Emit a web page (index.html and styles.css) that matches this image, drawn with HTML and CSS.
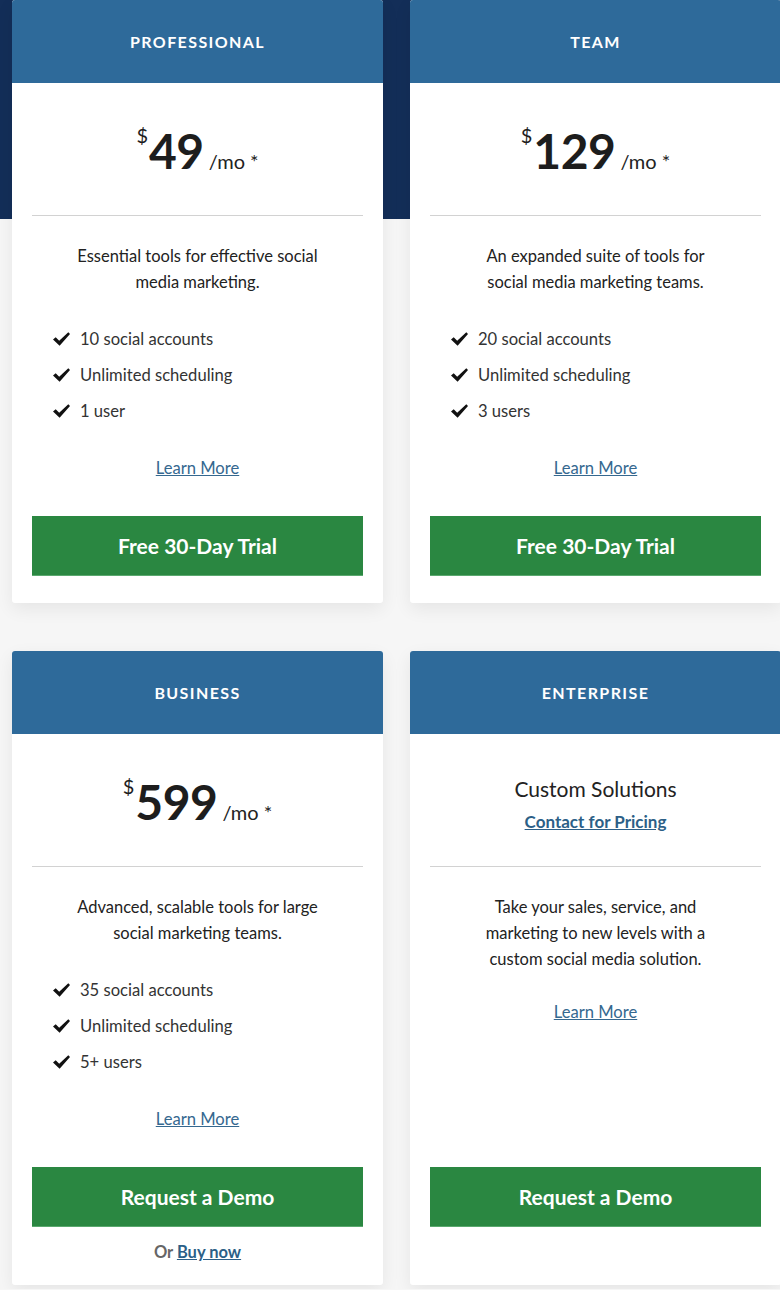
FILE: index.html
```html
<!DOCTYPE html>
<html lang="en">
<head>
<meta charset="utf-8">
<title>Pricing</title>
<link rel="stylesheet" href="styles.css">
</head>
<body>
<main class="page">
  <div class="grid">
    <section class="card">
      <header class="card-head">PROFESSIONAL</header>
      <div class="card-body">
        <div class="price-area">
          <div class="price"><span class="cur">$</span><span class="amount">49</span><span class="per">/mo *</span></div>
        </div>
        <p class="desc">Essential tools for effective social<br>media marketing.</p>
        <ul class="features">
          <li><svg class="check" viewBox="0 0 17 14"><path d="M0 7.6 L2.7 5.3 L6.2 8.7 L15.3 0.2 L17 1.9 L6.6 13.7 Z"/></svg>10 social accounts</li>
          <li><svg class="check" viewBox="0 0 17 14"><path d="M0 7.6 L2.7 5.3 L6.2 8.7 L15.3 0.2 L17 1.9 L6.6 13.7 Z"/></svg>Unlimited scheduling</li>
          <li><svg class="check" viewBox="0 0 17 14"><path d="M0 7.6 L2.7 5.3 L6.2 8.7 L15.3 0.2 L17 1.9 L6.6 13.7 Z"/></svg>1 user</li>
        </ul>
        <a class="learn" href="#">Learn More</a>
        <div class="actions">
          <a class="btn" href="#">Free 30-Day Trial</a>
        </div>
      </div>
    </section>
    <section class="card">
      <header class="card-head">TEAM</header>
      <div class="card-body">
        <div class="price-area">
          <div class="price"><span class="cur">$</span><span class="amount">129</span><span class="per">/mo *</span></div>
        </div>
        <p class="desc">An expanded suite of tools for<br>social media marketing teams.</p>
        <ul class="features">
          <li><svg class="check" viewBox="0 0 17 14"><path d="M0 7.6 L2.7 5.3 L6.2 8.7 L15.3 0.2 L17 1.9 L6.6 13.7 Z"/></svg>20 social accounts</li>
          <li><svg class="check" viewBox="0 0 17 14"><path d="M0 7.6 L2.7 5.3 L6.2 8.7 L15.3 0.2 L17 1.9 L6.6 13.7 Z"/></svg>Unlimited scheduling</li>
          <li><svg class="check" viewBox="0 0 17 14"><path d="M0 7.6 L2.7 5.3 L6.2 8.7 L15.3 0.2 L17 1.9 L6.6 13.7 Z"/></svg>3 users</li>
        </ul>
        <a class="learn" href="#">Learn More</a>
        <div class="actions">
          <a class="btn" href="#">Free 30-Day Trial</a>
        </div>
      </div>
    </section>
    <section class="card">
      <header class="card-head">BUSINESS</header>
      <div class="card-body">
        <div class="price-area">
          <div class="price"><span class="cur">$</span><span class="amount">599</span><span class="per">/mo *</span></div>
        </div>
        <p class="desc">Advanced, scalable tools for large<br>social marketing teams.</p>
        <ul class="features">
          <li><svg class="check" viewBox="0 0 17 14"><path d="M0 7.6 L2.7 5.3 L6.2 8.7 L15.3 0.2 L17 1.9 L6.6 13.7 Z"/></svg>35 social accounts</li>
          <li><svg class="check" viewBox="0 0 17 14"><path d="M0 7.6 L2.7 5.3 L6.2 8.7 L15.3 0.2 L17 1.9 L6.6 13.7 Z"/></svg>Unlimited scheduling</li>
          <li><svg class="check" viewBox="0 0 17 14"><path d="M0 7.6 L2.7 5.3 L6.2 8.7 L15.3 0.2 L17 1.9 L6.6 13.7 Z"/></svg>5+ users</li>
        </ul>
        <a class="learn" href="#">Learn More</a>
        <div class="actions">
          <a class="btn" href="#">Request a Demo</a>
          <p class="alt">Or <a href="#">Buy now</a></p>
        </div>
      </div>
    </section>
    <section class="card">
      <header class="card-head">ENTERPRISE</header>
      <div class="card-body">
        <div class="price-area">
          <div class="custom">Custom Solutions</div>
          <a class="contact" href="#">Contact for Pricing</a>
        </div>
        <p class="desc">Take your sales, service, and<br>marketing to new levels with a<br>custom social media solution.</p>
        <a class="learn learn-tight" href="#">Learn More</a>
        <div class="actions actions-spaced">
          <a class="btn" href="#">Request a Demo</a>
        </div>
      </div>
    </section>
  </div>
</main>
</body>
</html>
```

FILE: styles.css
```css
* { box-sizing: border-box; }

html, body {
  margin: 0;
  padding: 0;
}

body {
  width: 780px;
  overflow-x: hidden;
  font-family: Lato, "Liberation Sans", sans-serif;
  color: #222;
  background: #f6f6f6;
}

.page {
  background: linear-gradient(to bottom, #132e58 0, #132e58 219px, #f6f6f6 219px);
  padding: 0 0 4px 12px;
  width: 800px;
}

.grid {
  display: grid;
  grid-template-columns: 371px 371px;
  column-gap: 27px;
  row-gap: 48px;
}

.card {
  background: #fff;
  border-radius: 3px;
  box-shadow: 0 6px 18px rgba(0, 0, 0, 0.07);
  display: flex;
  flex-direction: column;
}

.card-head {
  height: 83px;
  background: #2e6a9a;
  color: #fff;
  border-radius: 3px 3px 0 0;
  display: flex;
  align-items: center;
  justify-content: center;
  font-weight: 700;
  font-size: 16px;
  letter-spacing: 1.4px;
}

.card-body {
  flex: 1;
  display: flex;
  flex-direction: column;
  padding: 0 20px 27px;
}

.price-area {
  height: 133px;
  border-bottom: 1px solid #d2d2d2;
  display: flex;
  flex-direction: column;
  align-items: center;
  justify-content: center;
}

.price {
  display: flex;
  align-items: baseline;
  color: #1d1d1d;
  padding-top: 4px;
}

.cur {
  font-size: 20px;
  align-self: flex-start;
  margin-top: -4px;
  margin-right: 1px;
}

.amount {
  font-size: 48px;
  font-weight: 700;
  line-height: 1;
  letter-spacing: -0.5px;
}

.per {
  font-size: 20px;
  margin-left: 5px;
  color: #222;
}

.custom {
  font-size: 21px;
  color: #222;
  line-height: 28px;
  margin-top: 8px;
}

.contact {
  font-size: 17px;
  font-weight: 700;
  color: #2c5f87;
  line-height: 24px;
  margin-top: 7px;
}

.desc {
  margin: 27px 0 0;
  text-align: center;
  font-size: 16.5px;
  line-height: 26px;
  color: #222;
}

.features {
  list-style: none;
  margin: 31px 0 0;
  padding: 0 0 0 21px;
  display: flex;
  flex-direction: column;
  gap: 10px;
}

.features li {
  display: flex;
  align-items: center;
  font-size: 16.6px;
  line-height: 26px;
  color: #333;
}

.check {
  width: 17px;
  height: 14px;
  fill: #111;
  margin-right: 10px;
  flex: none;
}

.learn {
  align-self: center;
  margin-top: 31px;
  font-size: 16.6px;
  line-height: 26px;
  color: #35688f;
}

.learn-tight {
  margin-top: 27px;
}

.actions {
  margin-top: auto;
  padding-top: 35px;
  display: flex;
  flex-direction: column;
  align-items: center;
}

.actions-spaced {
  padding-bottom: 31px;
}

.btn {
  width: 100%;
  height: 60px;
  background: #2a8741;
  color: #fff;
  text-decoration: none;
  font-weight: 700;
  font-size: 21px;
  display: flex;
  align-items: center;
  justify-content: center;
  border-bottom: 1px solid #5aa86e;
}

.alt {
  margin: 14px 0 -5px;
  font-size: 16.5px;
  line-height: 22px;
  font-weight: 700;
  color: #666;
}

.alt a {
  color: #2c5f87;
}
```
